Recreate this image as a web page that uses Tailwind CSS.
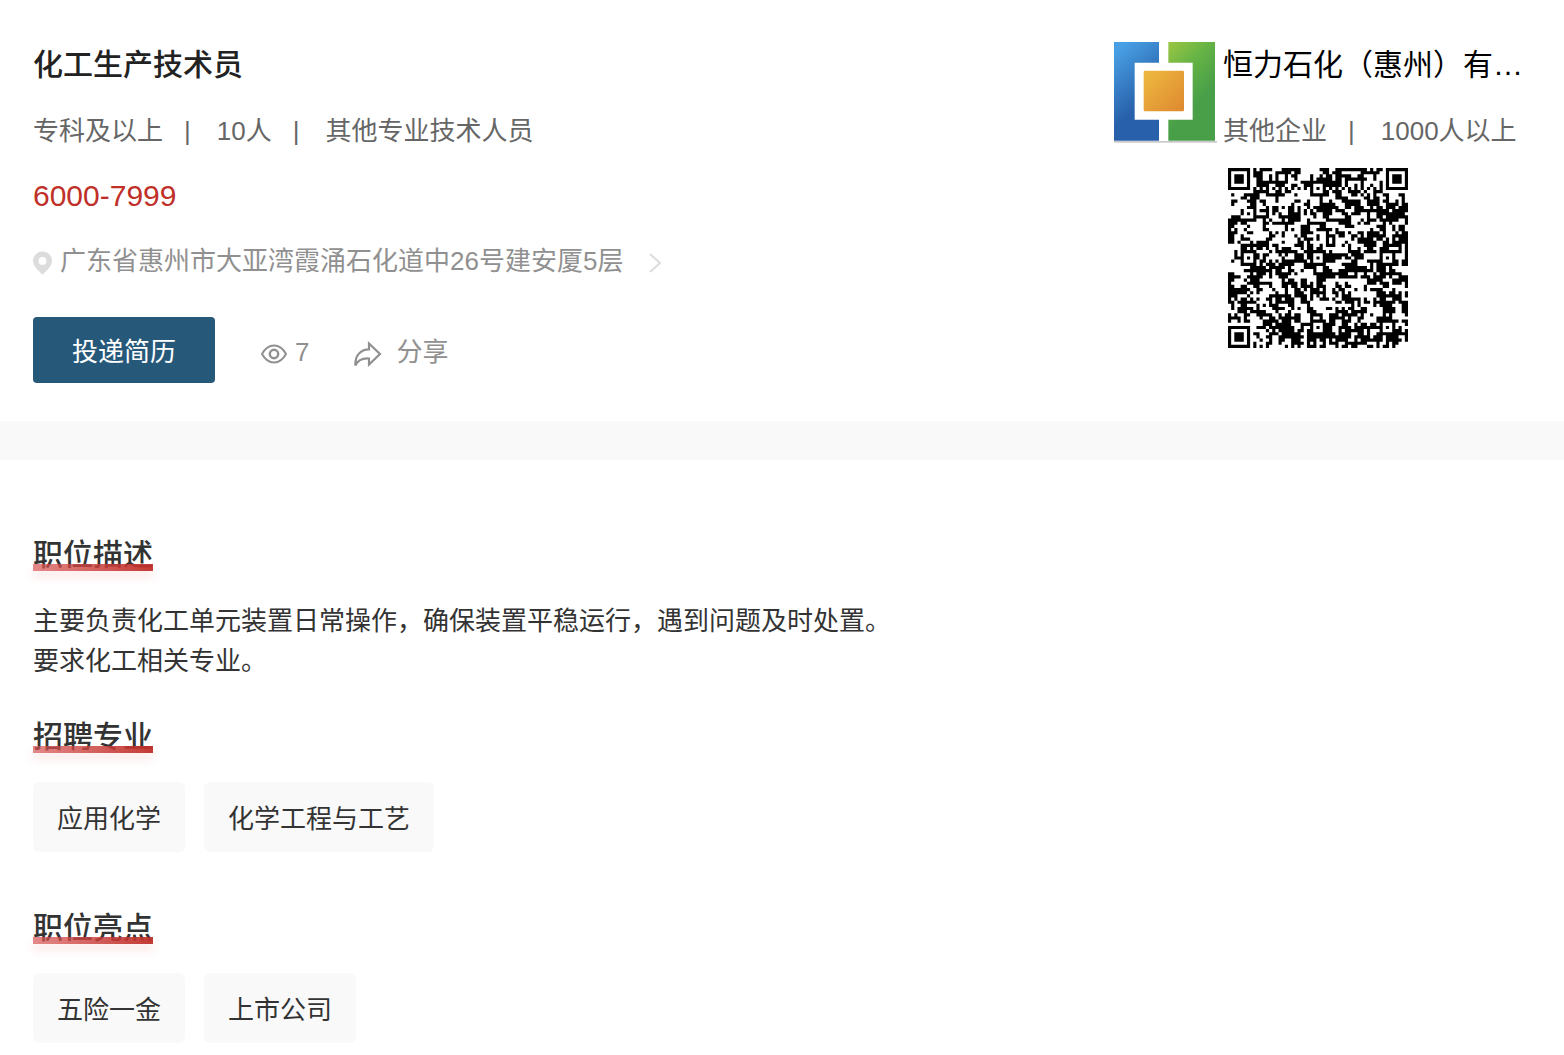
<!DOCTYPE html>
<html lang="zh-CN">

<head>
	<meta charset="UTF-8" />
	<meta name="viewport" content="width=device-width, initial-scale=1.0" />
	<title>化工生产技术员</title>
	<script src="https://cdn.jsdelivr.net/npm/@tailwindcss/browser@4"></script>
</head>

<body class="bg-white text-[26px] text-[#333] font-['Liberation_Sans','Noto_Sans_CJK_SC',sans-serif]">
	<!-- Job header -->
	<header class="flex justify-between px-[33px] pt-8 pb-[38px]">
		<div>
			<h1 class="text-[30px] leading-[66px] font-medium text-[#222]">化工生产技术员</h1>
			<div class="flex leading-[66px] text-[#666]">
				<span>专科及以上</span>
				<span class="ml-[21px] mr-[26px]">|</span>
				<span>10人</span>
				<span class="ml-[21px] mr-[26px]">|</span>
				<span>其他专业技术人员</span>
			</div>
			<p class="text-[30px] leading-[64px] text-[#c03028]">6000-7999</p>
			<a href="#map" class="flex items-center leading-[66px] text-[#909090]">
				<svg class="w-[19px] h-6 mt-1 mr-2" viewBox="0 0 19 24" fill="#dcdcdc" fill-rule="evenodd">
					<path d="M9.500 0.500C4.300 0.500 0 4.500 0 9.800C0 15.500 6 20 9.500 23.800C13 20 19 15.500 19 9.800C19 4.500 14.700 0.500 9.500 0.500ZM9.500 6A3.900 3.900 0 1 1 9.500 13.800A3.900 3.900 0 1 1 9.500 6Z" />
				</svg>
				<span>广东省惠州市大亚湾霞涌石化道中26号建安厦5层</span>
				<svg class="w-3 h-5 mt-1 ml-[26px]" viewBox="0 0 12 20" fill="none" stroke="#dcdcdc" stroke-width="2">
					<path d="M1 1L11 10L1 19" />
				</svg>
			</a>
			<div class="flex items-center mt-[23px] text-[#909090]">
				<button type="button" class="w-[182px] h-[66px] pt-1 rounded bg-[#26587a] text-white">投递简历</button>
				<div class="flex items-center pt-1 ml-[46px]">
					<svg class="w-[26px] h-5 mt-1 mr-2" viewBox="0 0 26 20" fill="none" stroke="#909090" stroke-width="2">
						<path d="M1 10C4 4.500 8 1.500 13 1.500S22 4.500 25 10C22 15.500 18 18.500 13 18.500S4 15.500 1 10Z" />
						<circle cx="13" cy="10" r="4.200" stroke-width="2.400" />
					</svg>
					<span>7</span>
				</div>
				<button type="button" class="flex items-center pt-1 ml-[45px]">
					<svg class="w-7 h-[26px] mt-1 mr-[14px]" viewBox="0 0 28 26" fill="none" stroke="#909090" stroke-width="2.200">
						<path d="M15 2.500L26 13L15 23.500V17.500C9 17 4 19 1.300 24.500C1 15 6 8.500 15 8.300Z" />
					</svg>
					<span>分享</span>
				</button>
			</div>
		</div>

		<!-- Company -->
		<div class="flex">
			<svg class="shrink-0 w-[103px] h-[101px] mt-[10px] mr-[6px]" viewBox="0 0 309 303">
				<defs>
					<linearGradient id="blue" x1="0" y1="0" x2="0.400" y2="1">
						<stop offset="0.100" stop-color="#489fe3" />
						<stop offset="0.750" stop-color="#2860ab" />
					</linearGradient>
					<linearGradient id="green" x1="0" y1="0" x2="0.500" y2="1">
						<stop offset="0" stop-color="#9bc643" />
						<stop offset="0.350" stop-color="#67b445" />
						<stop offset="0.750" stop-color="#489f48" />
					</linearGradient>
					<linearGradient id="orange" x1="0" y1="0" x2="1" y2="1">
						<stop offset="0.100" stop-color="#ecb63e" />
						<stop offset="0.900" stop-color="#e08d31" />
					</linearGradient>
				</defs>
				<path fill="url(#blue)" d="M0 0H135V62H62V233H135V296H0Z" />
				<path fill="url(#green)" d="M163 0H303V296H163V233H236V62H163Z" />
				<rect x="89" y="86" width="121" height="122" rx="4" fill="url(#orange)" />
				<rect y="297" width="309" height="5" fill="#c8c8cc" />
			</svg>
			<div class="w-[308px]">
				<h2 class="truncate text-[30px] leading-[66px] text-black">恒力石化（惠州）有限公司</h2>
				<div class="flex leading-[66px] text-[#666]">
					<span>其他企业</span>
					<span class="ml-[21px] mr-[26px]">|</span>
					<span>1000人以上</span>
				</div>
				<svg id="qr" class="w-[180px] h-[180px] mt-1 ml-[5px]" viewBox="0 0 57 57" role="img" aria-label="二维码">
					<path d="" fill="#000" />
				</svg>
			</div>
		</div>
	</header>

	<div class="h-[39px] bg-[#f9f9f9]"></div>

	<!-- Job details -->
	<main class="px-[33px] pt-[75px] pb-3">
		<section>
			<h3 class="relative w-fit text-[30px] leading-[40px] font-medium">
				职位描述
				<span class="absolute left-0 bottom-1 w-full h-[7px] bg-linear-to-r from-[#d85555]/70 to-[#c0302a]/95 shadow-[0_6px_10px_rgba(230,80,80,0.15)]"></span>
			</h3>
			<p class="mt-[26px] leading-[40px]">主要负责化工单元装置日常操作，确保装置平稳运行，遇到问题及时处置。<br>要求化工相关专业。</p>
		</section>

		<section class="mt-9">
			<h3 class="relative w-fit text-[30px] leading-[40px] font-medium">
				招聘专业
				<span class="absolute left-0 bottom-1 w-full h-[7px] bg-linear-to-r from-[#d85555]/70 to-[#c0302a]/95 shadow-[0_6px_10px_rgba(230,80,80,0.15)]"></span>
			</h3>
			<ul class="flex flex-wrap gap-[19px] mt-[25px]">
				<li class="px-6 pt-1 leading-[66px] rounded-md bg-[#f9f9f9]">应用化学</li>
				<li class="px-6 pt-1 leading-[66px] rounded-md bg-[#f9f9f9]">化学工程与工艺</li>
			</ul>
		</section>

		<section class="mt-14">
			<h3 class="relative w-fit text-[30px] leading-[40px] font-medium">
				职位亮点
				<span class="absolute left-0 bottom-1 w-full h-[7px] bg-linear-to-r from-[#d85555]/70 to-[#c0302a]/95 shadow-[0_6px_10px_rgba(230,80,80,0.15)]"></span>
			</h3>
			<ul class="flex flex-wrap gap-[19px] mt-[25px]">
				<li class="px-6 pt-1 leading-[66px] rounded-md bg-[#f9f9f9]">五险一金</li>
				<li class="px-6 pt-1 leading-[66px] rounded-md bg-[#f9f9f9]">上市公司</li>
			</ul>
		</section>
	</main>

	<script>
		// Draws the 57 x 57 code: finders, timing lines, alignment marks, then the filler modules
		const size = 57;
		const finders = [[3, 3], [53, 3], [3, 53]];
		const marks = [[28, 6], [6, 28], [28, 28], [50, 28], [28, 50], [50, 50]];
		const rows = [];
		let seed = 20417;

		function random() {
			seed = (seed * 1103515245 + 12345) % 2147483648;
			return seed / 2147483648;
		}

		function isDark(x, y) {
			const roll = random();
			for (const [cx, cy] of finders) {
				const d = Math.max(Math.abs(x - cx), Math.abs(y - cy));
				if (d <= 4) return d === 3 || d <= 1;
			}
			for (const [cx, cy] of marks) {
				const d = Math.max(Math.abs(x - cx), Math.abs(y - cy));
				if (d <= 2) return d !== 1;
			}
			if (y === 6) return x % 2 === 0;
			if (x === 6) return y % 2 === 0;
			// some modules repeat a neighbour so that they run together
			if (roll < 0.18 && x > 0) return rows[y][x - 1];
			if (roll < 0.36 && y > 0) return rows[y - 1][x];
			return random() < 0.53;
		}

		let d = "";
		for (let y = 0; y < size; y++) {
			rows.push([]);
			for (let x = 0; x < size; x++) {
				rows[y].push(isDark(x, y));
			}
			let start = -1;
			for (let x = 0; x <= size; x++) {
				const dark = x < size && rows[y][x];
				if (dark && start < 0) start = x;
				if (!dark && start >= 0) {
					d += `M${start} ${y}H${x}V${y + 1}H${start}Z`;
					start = -1;
				}
			}
		}
		document.querySelector("#qr path").setAttribute("d", d);
	</script>
</body>

</html>
